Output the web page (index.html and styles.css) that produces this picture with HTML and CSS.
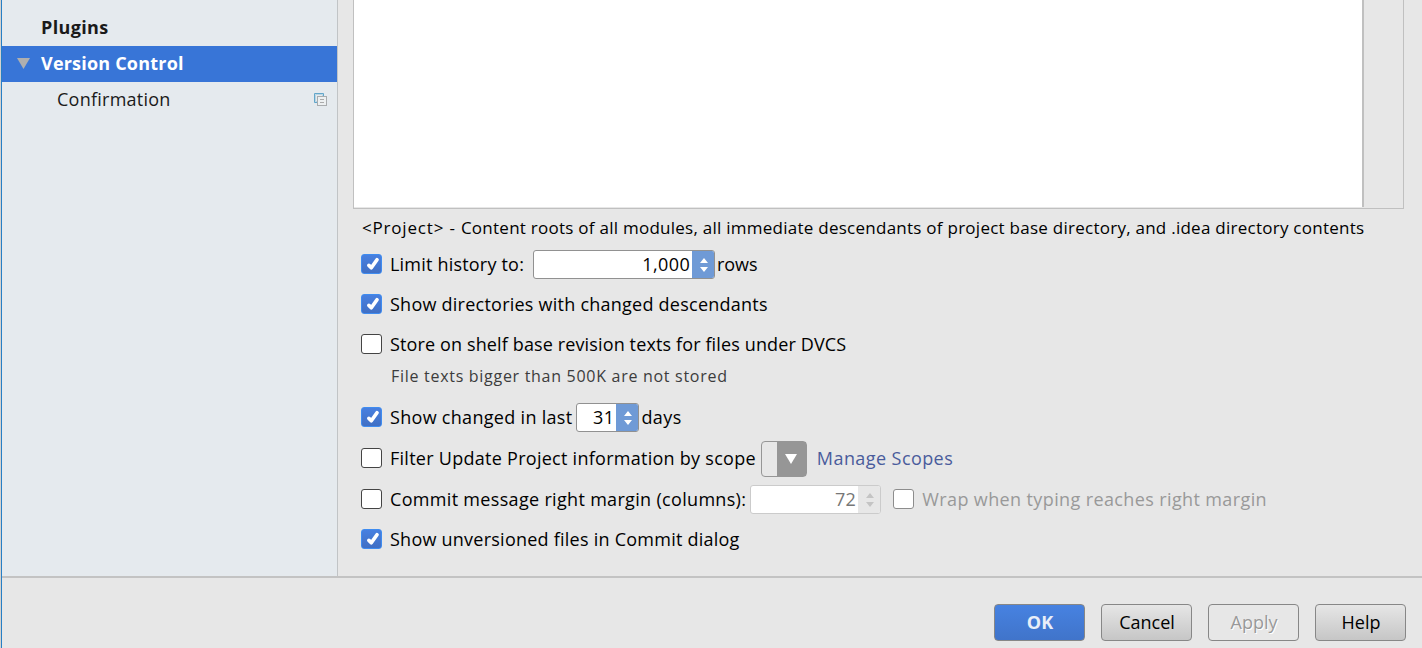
FILE: index.html
```
<!DOCTYPE html>
<html lang="en">
<head>
<meta charset="utf-8">
<title>Settings</title>
<link rel="stylesheet" href="styles.css">
</head>
<body>
<svg class="defs" width="0" height="0">
  <symbol id="check" viewBox="0 0 21 20"><path d="M7.900 11.400 10.300 13.800 16 5.800" fill="none" stroke="#fff" stroke-width="3.700" stroke-linecap="round" stroke-linejoin="round"/></symbol>
  <symbol id="arrows" viewBox="0 0 8 14"><path d="M0 5 4 0 8 5zM0 9H8L4 14z" fill="currentColor"/></symbol>
</svg>
<div class="window">
  <div class="main">
    <nav class="sidebar">
      <div class="item bold"><span class="t-plugins">Plugins</span></div>
      <div class="item bold selected"><svg class="twisty" viewBox="0 0 13 11"><path d="M0 0H13L6.5 11z" fill="#afafaf"/></svg><span class="t-vc">Version Control</span></div>
      <div class="item child"><span class="t-conf">Confirmation</span>
        <svg class="copy" viewBox="0 0 13 13"><path d="M9.5 3V.5H.5V9.500H3" fill="none" stroke="#62a6ca"/><path d="M3 8.500H1.500V1.500H8.500V3" fill="none" stroke="#b9d5e3"/><rect x="3.500" y="3.500" width="9" height="9" fill="#edf0f1" stroke="#a9acae"/><path d="M6 6.500H10M6 9.500H10" stroke="#aaa"/></svg>
      </div>
    </nav>
    <section class="content">
      <div class="table"><div class="sheet"></div></div>
      <p class="note"><span class="t-project">&lt;Project&gt; - </span><span class="t-note">Content roots of all modules, all immediate descendants of project base directory, and .idea directory contents</span></p>
      <div class="row"><i class="box on"><svg><use href="#check"/></svg></i><label class="t-limit">Limit history to:</label>
        <div class="spinner wide"><b>1,000</b><span><svg><use href="#arrows"/></svg></span></div><label class="unit t-rows">rows</label></div>
      <div class="row"><i class="box on"><svg><use href="#check"/></svg></i><label class="t-dirs">Show directories with changed descendants</label></div>
      <div class="row"><i class="box"></i><label class="t-shelf">Store on shelf base revision texts for files under DVCS</label></div>
      <div class="hint"><span class="t-hint">File texts bigger than 500K are not stored</span></div>
      <div class="row"><i class="box on"><svg><use href="#check"/></svg></i><label class="t-last">Show changed in last</label>
        <div class="spinner small"><b>31</b><span><svg><use href="#arrows"/></svg></span></div><label class="unit t-days">days</label></div>
      <div class="row tall"><i class="box"></i><label class="t-filter">Filter Update Project information by scope</label>
        <div class="combo"><span><svg viewBox="0 0 12 10"><path d="M0 0H12L6 10z" fill="#fff"/></svg></span></div><a class="t-scopes">Manage Scopes</a></div>
      <div class="row tall"><i class="box"></i><label class="t-commit">Commit message right margin (columns):</label>
        <div class="spinner off"><b>72</b><span><svg><use href="#arrows"/></svg></span></div><i class="box dim"></i><label class="disabled t-wrap">Wrap when typing reaches right margin</label></div>
      <div class="row"><i class="box on"><svg><use href="#check"/></svg></i><label class="t-unv">Show unversioned files in Commit dialog</label></div>
    </section>
  </div>
  <footer class="buttons">
    <button class="btn primary">OK</button>
    <button class="btn">Cancel</button>
    <button class="btn inactive">Apply</button>
    <button class="btn">Help</button>
  </footer>
</div>
</body>
</html>
```
FILE: styles.css
```
* { box-sizing: border-box; }
body { margin: 0; background: #d5d2cf; font: 18px/24px "Open Sans", "Noto Sans", sans-serif; color: #000; overflow: hidden; }
.defs { display: block; height: 0; }
.window { margin-left: 1px; height: 648px; border-left: 1px solid #277fc5; background: #e7e7e7; white-space: nowrap; }
.main { display: flex; height: 578px; border-bottom: 2px solid #c3c3c3; }
.sidebar { width: 336px; padding-top: 10px; background: #e5eaee; border-right: 1px solid #c1c4c6; color: #1a1a1a; }
.item { display: flex; align-items: center; height: 36px; padding-left: 39px; }
.item span { margin-top: -2px; }
.bold { font-weight: 700; }
.selected { background: #3875d7; color: #fff; padding-left: 15px; }
.twisty { width: 13px; height: 11px; margin: -1px 11px 0 0; }
.child { padding: 0 10px 0 55px; justify-content: space-between; }
.copy { width: 13px; height: 13px; margin-top: -1px; }
.content { flex: 1; padding-left: 15px; }
.table { width: 1051px; height: 209px; border: solid #c0c0c0; border-width: 0 1px 1px; }
.sheet { width: 1010px; height: 207px; background: #fff; border-right: 2px solid #c0c0c0; }
.note { margin: 0; height: 35px; padding: 7px 0 0 9px; font-size: 17px; }
.row { display: flex; align-items: center; height: 40px; padding-left: 8px; }
.tall { height: 41px; }
.box { width: 21px; height: 20px; flex: none; margin-right: 8px; background: #fff; border: 1px solid #444; border-radius: 3px; }
.on { border-color: #3f8cf0; background: linear-gradient(#4880e0, #406fc4); }
.on svg { display: block; width: 21px; height: 20px; margin: -1px; }
.dim { border-color: #8d8d8d; margin-left: 12px; }
.spinner { display: flex; flex: none; height: 29px; border: 1px solid #919191; border-radius: 3px; background: #fff; overflow: hidden; }
.spinner b { flex: 1; text-align: right; font-weight: 400; line-height: 27px; padding-right: 2px; letter-spacing: .4px; }
.spinner span { width: 22px; padding: 1px 0 0 1px; background: #6f9ad6; color: #fff; display: flex; align-items: center; justify-content: center; }
.spinner svg { width: 8px; height: 14px; }
.wide { width: 182px; margin-left: 9px; }
.small { width: 63px; margin-left: 4px; }
.off { width: 131px; margin: 1px 0 0 4px; border-color: #cbcbcb; }
.off b { color: #777; }
.off span { background: #e7e7e7; color: #c4c4c4; }
.unit { margin-left: 2px; }
.hint { height: 33px; padding-left: 38px; font-size: 16px; color: #3c3c3c; }
.combo { flex: none; width: 46px; height: 36px; margin: 2px 0 0 5px; border: 1px solid #969696; border-radius: 4px; display: flex; justify-content: flex-end; }
.combo span { width: 29px; background: #969696; display: flex; align-items: center; justify-content: center; }
.combo svg { width: 12px; height: 10px; }
.row a { margin-left: 10px; color: #4a5c9c; }
.disabled { color: #999; }
.t-plugins { letter-spacing: .35px; }
.t-vc { letter-spacing: .2px; }
.t-conf { letter-spacing: .25px; }
.t-project { letter-spacing: .81px; }
.t-note { letter-spacing: .256px; }
.t-limit { letter-spacing: .2px; }
.t-rows { letter-spacing: -.1px; }
.t-dirs { letter-spacing: .24px; }
.t-shelf { letter-spacing: .13px; }
.t-hint { letter-spacing: .71px; }
.t-last { letter-spacing: .3px; }
.t-days { letter-spacing: .4px; }
.t-filter { letter-spacing: .27px; }
.t-scopes { letter-spacing: .42px; }
.t-commit { letter-spacing: .32px; }
.t-wrap { letter-spacing: .38px; }
.t-unv { letter-spacing: .24px; }
.buttons { display: flex; justify-content: flex-end; gap: 16px; padding: 26px 16px 0 0; }
.btn { width: 91px; height: 37px; padding: 0 0 2px 1px; border: 1px solid #878787; border-radius: 4px; background: linear-gradient(#e6e6e6, #c6c6c6); font: inherit; color: #000; }
.primary { background: linear-gradient(#4782e1, #4074ca); color: #e9eef8; font-weight: 700; }
.inactive { background: #e7e7e7; color: #999; text-shadow: 1px 1px #fff; }
```
